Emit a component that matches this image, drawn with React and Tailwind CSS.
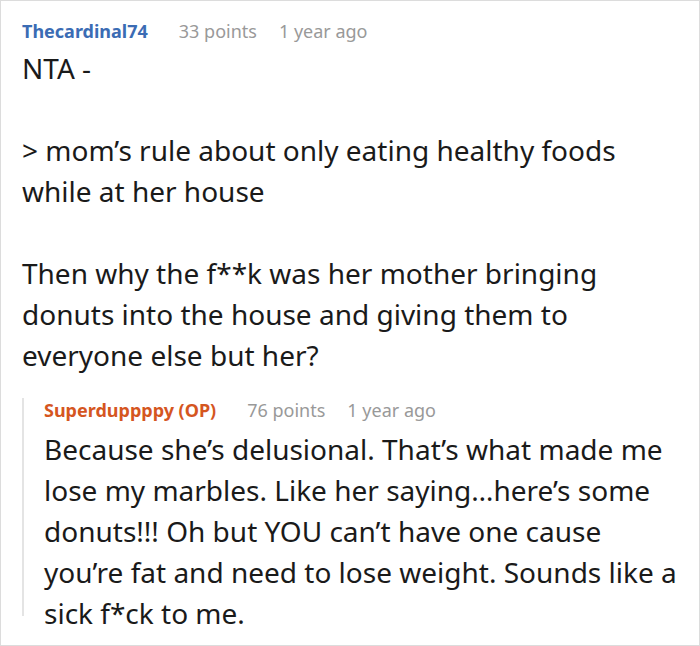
export default function App() {
  const font = { fontFamily: '"Noto Sans", "Open Sans", sans-serif' };
  return (
    <div
      className="w-[700px] h-[646px] bg-white border border-[#dcdcdc] pl-[21px] pr-[4px] pt-[18px] overflow-hidden box-border"
      style={font}
    >
      <div className="flex items-center text-[18px] leading-[24px]">
        <span className="font-bold text-[#3b6cb4]">Thecardinal74</span>
        <span className="ml-[31px] text-[#999]">33 points</span>
        <span className="ml-[22px] text-[#999]">1 year ago</span>
      </div>
      <div className="mt-[5px] text-[28px] leading-[41px] text-[#1a1a1a] whitespace-nowrap">
        <p>NTA -</p>
        <p className="mt-[41px]">&gt; mom’s rule about only eating healthy foods<br />while at her house</p>
        <p className="mt-[41px]">Then why the f**k was her mother bringing<br />donuts into the house and giving them to<br />everyone else but her?</p>
      </div>
      <div className="mt-[34px] h-[218px] border-l-2 border-[#e4e4e4] pl-[20px]">
        <div className="-mt-[12px] flex items-center text-[18px] leading-[24px]">
          <span className="font-bold text-[#d5561f]">Superduppppy (OP)</span>
          <span className="ml-[31px] text-[#999]">76 points</span>
          <span className="ml-[22px] text-[#999]">1 year ago</span>
        </div>
        <div className="mt-[7px] text-[28px] leading-[41px] text-[#1a1a1a] whitespace-nowrap">
          <p>Because she’s delusional. That’s what made me<br />lose my marbles. Like her saying…here’s some<br />donuts!!! Oh but YOU can’t have one cause<br />you’re fat and need to lose weight. Sounds like a<br />sick f*ck to me.</p>
        </div>
      </div>
    </div>
  );
}
